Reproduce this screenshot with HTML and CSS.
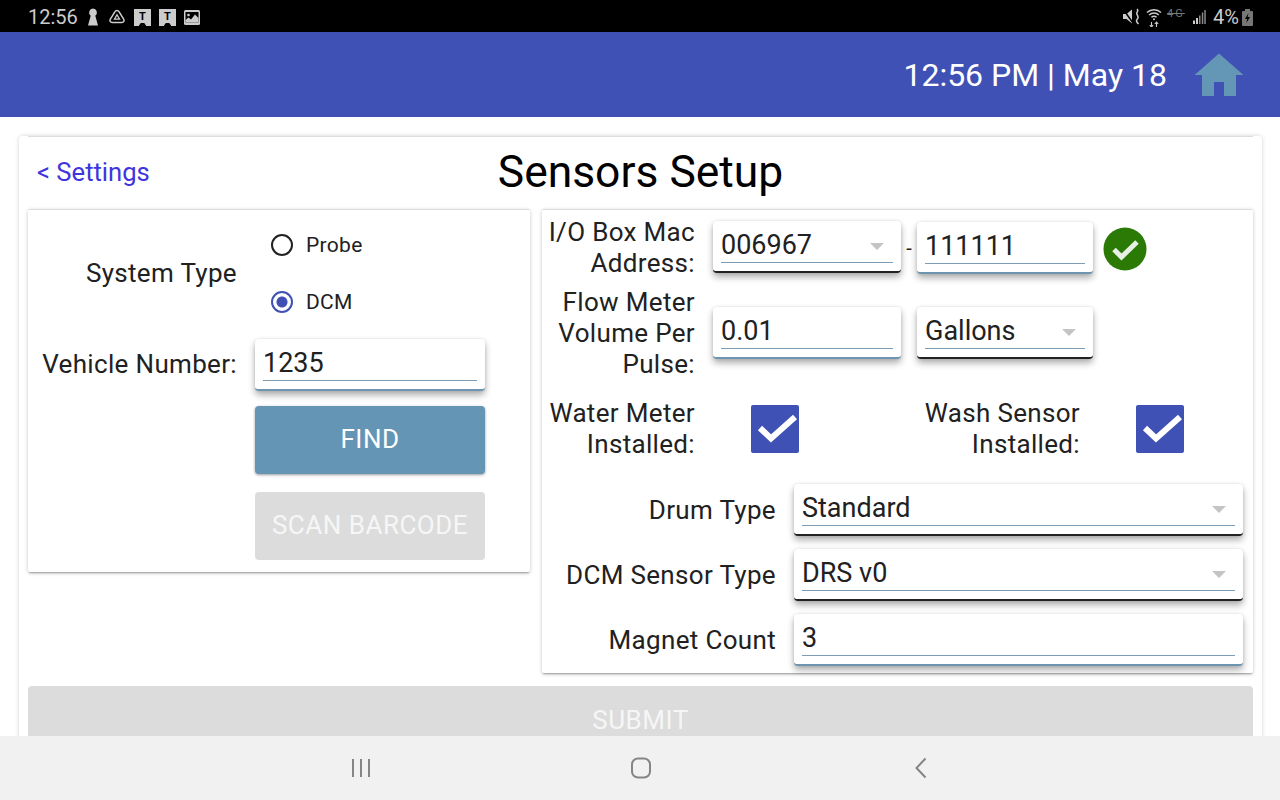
FILE: index.html
```html
<!DOCTYPE html>
<html lang="en">
<head>
  <title>Sensors Setup</title>
  <link rel="stylesheet" href="styles.css">
</head>
<body>

  <div class="status-bar">
    <div class="status-left">
      <span class="status-time">12:56</span>
      <svg class="ic-key" width="12" height="18" viewBox="0 0 12 18"><path d="M6 .5a4 4 0 0 1 2.300 7.200L11 17.500H1L3.700 7.700A4 4 0 0 1 6 .5z" fill="#ccc"/></svg>
      <svg class="ic-drive" width="18" height="16" viewBox="0 0 18 16"><path d="M9 1.500c1 0 1.600.5 2 1.200l4.800 7.600c.8 1.500-.1 3.200-1.900 3.200H4.100c-1.800 0-2.700-1.700-1.900-3.200L7 2.700c.4-.7 1-1.200 2-1.200z" fill="none" stroke="#ccc" stroke-width="1.500"/><path d="M9 5.800l2.500 4.400h-5z" fill="none" stroke="#ccc" stroke-width="1.300"/></svg>
      <span class="ic-t">T</span>
      <span class="ic-t">T</span>
      <svg class="ic-pic" width="16" height="15" viewBox="0 0 16 15"><rect width="16" height="15" rx="1.500" fill="#ccc"/><rect x="1.500" y="2" width="13" height="10.500" fill="#000"/><path d="M1.500 12.500V10l3-2.500 2.500 2 4-5 3.500 3.500v4.500z" fill="#ccc"/><circle cx="4.500" cy="5" r="1.300" fill="#ccc"/></svg>
    </div>
    <div class="status-right">
      <svg width="22" height="20" viewBox="0 0 22 20"><path d="M1 7h3.500L10 2.500v14L4.500 12H1z" fill="#ccc"/><path d="M1 2l10 14" stroke="#000" stroke-width="1.500"/><path d="M15 2c2.500 2-1.500 3.500 0 5.500s1.500 3.500 0 5 0 3 1.500 4.500" fill="none" stroke="#ccc" stroke-width="1.500"/></svg>
      <svg width="16" height="20" viewBox="0 0 16 20"><path d="M1 5.500a10 10 0 0 1 14 0M3.200 8a7 7 0 0 1 9.600 0M5.400 10.300a4 4 0 0 1 5.200 0" fill="none" stroke="#ccc" stroke-width="1.500"/><circle cx="8" cy="12.300" r="1" fill="#ccc"/><path d="M5.500 15v5M3.800 18l1.700 2 1.700-2M10.500 20v-5M8.800 17l1.700-2 1.700 2" fill="none" stroke="#ccc" stroke-width="1.100"/></svg>
      <span class="ic-lte">4G</span>
      <svg width="14" height="16" viewBox="0 0 14 16"><path d="M1 11.500h2V15H1zM4 9h2v6H4z" fill="#ccc"/><path d="M7 6.500h1.500V15H7zM9.800 3.500h1.500V15H9.800zM12.300 1h1.500v14h-1.500z" fill="#888"/></svg>
      <span class="status-pct">4%</span>
      <svg width="11" height="17" viewBox="0 0 11 17"><rect x="3" y="0" width="5" height="2" fill="#777"/><rect y="2" width="11" height="15" rx="1" fill="#777"/><path d="M6.500 4L3 10h2.200L4.300 14 8 8H5.600z" fill="#000"/></svg>
    </div>
  </div>

  <div class="app-bar">
    <span class="app-clock">12:56 PM | May 18</span>
    <svg class="home-icon" width="50" height="44" viewBox="0 0 50 44"><path d="M25 .5L49.500 22H42v21H30V29H20v14H8V22H.500z" fill="#6496b5"/></svg>
  </div>

  <div class="content">
    <div class="page-card">
      <div class="page-head">
        <a class="back-link" href="#">&lt; Settings</a>
        <h1>Sensors Setup</h1>
      </div>

      <div class="columns">
        <div class="panel left-panel">
          <div class="system-row">
            <div class="left-label">System Type</div>
            <div class="radios">
              <div class="radio-item"><span class="radio"></span>Probe</div>
              <div class="radio-item"><span class="radio radio-on"></span>DCM</div>
            </div>
          </div>
          <div class="vehicle-row">
            <div class="left-label">Vehicle Number:</div>
            <div class="field field-input vehicle-field"><div class="field-value">1235</div></div>
          </div>
          <div class="btn btn-find">FIND</div>
          <div class="btn btn-scan">SCAN BARCODE</div>
        </div>

        <div class="panel right-panel">
          <div class="form-row mac-row">
            <div class="row-label">I/O Box Mac<br>Address:</div>
            <div class="field field-select w-188 mac-prefix"><div class="field-value">006967<span class="caret"></span></div></div>
            <span class="dash">-</span>
            <div class="field field-input w-176"><div class="field-value">111111</div></div>
            <svg class="ok-icon" width="44" height="44" viewBox="0 0 44 44"><circle cx="22" cy="22" r="21.500" fill="#2a7a05"/><path d="M11 22.500l7.500 7.500L34 15" fill="none" stroke="#e8efe4" stroke-width="5"/></svg>
          </div>
          <div class="form-row flow-row">
            <div class="row-label">Flow Meter<br>Volume Per<br>Pulse:</div>
            <div class="field field-input w-188"><div class="field-value">0.01</div></div>
            <div class="field field-select w-176 unit-field"><div class="field-value">Gallons<span class="caret"></span></div></div>
          </div>
          <div class="form-row check-row">
            <div class="row-label">Water Meter<br>Installed:</div>
            <div class="checkbox water-check"><svg width="48" height="48" viewBox="0 0 48 48"><path d="M9 23l11 10.500L44 12" fill="none" stroke="#fff" stroke-width="6"/></svg></div>
            <div class="row-label wash-label">Wash Sensor<br>Installed:</div>
            <div class="checkbox wash-check"><svg width="48" height="48" viewBox="0 0 48 48"><path d="M9 23l11 10.500L44 12" fill="none" stroke="#fff" stroke-width="6"/></svg></div>
          </div>
          <div class="form-row wide-row drum-row">
            <div class="row-label wide-label">Drum Type</div>
            <div class="field field-select w-449"><div class="field-value">Standard<span class="caret"></span></div></div>
          </div>
          <div class="form-row wide-row">
            <div class="row-label wide-label">DCM Sensor Type</div>
            <div class="field field-select w-449"><div class="field-value">DRS v0<span class="caret"></span></div></div>
          </div>
          <div class="form-row wide-row">
            <div class="row-label wide-label">Magnet Count</div>
            <div class="field field-input w-449"><div class="field-value">3</div></div>
          </div>
        </div>
      </div>

      <div class="submit-btn">SUBMIT</div>
    </div>
  </div>

  <div class="nav-bar">
    <svg width="20" height="20" viewBox="0 0 20 20"><path d="M2 1v18M10 1v18M18 1v18" stroke="#858585" stroke-width="2" fill="none"/></svg>
    <svg class="nav-home" width="22" height="22" viewBox="0 0 22 22"><rect x="2" y="1.500" width="18" height="19" rx="6" stroke="#858585" stroke-width="2" fill="none"/></svg>
    <svg class="nav-back" width="14" height="22" viewBox="0 0 14 22"><path d="M11.500 1.500L2.500 11l9 9.500" stroke="#858585" stroke-width="2" fill="none"/></svg>
  </div>

</body>
</html>
```

FILE: styles.css
```css
* { box-sizing: border-box; margin: 0; padding: 0; }
html, body { height: 100%; }
body {
  width: 1280px;
  height: 800px;
  overflow: hidden;
  display: flex;
  flex-direction: column;
  font-family: Roboto, "Liberation Sans", sans-serif;
  color: #212121;
  background-color: #fff;
}

/* android status bar */
.status-bar {
  flex: 0 0 32px;
  background-color: #000;
  display: flex;
  align-items: center;
  justify-content: space-between;
  padding: 2px 27px 0 28px;
  color: #ccc;
}
.status-left, .status-right { display: flex; align-items: center; }
.status-time { font-size: 20px; margin-right: 9px; }
.ic-key { margin-right: 9px; }
.ic-drive { margin-right: 8px; }
.ic-t {
  width: 17px; height: 17px; margin-right: 8px;
  background: radial-gradient(circle at 50% 100%, #000 0 3px, #ccc 3.5px);
  color: #000;
  font-size: 11px; font-weight: bold; line-height: 16px; text-align: center;
}
.status-right svg { margin-left: 2px; }
.ic-lte {
  width: 20px; margin: 0 3px 6px 5px;
  font-size: 11px; line-height: 10px; color: #777; letter-spacing: 2px;
  text-decoration: line-through;
}
.status-pct { font-size: 20px; margin-left: 7px; margin-right: 1px; }

/* blue app bar */
.app-bar {
  flex: 0 0 85px;
  background-color: #3f51b5;
  display: flex;
  align-items: center;
  justify-content: flex-end;
  padding-right: 36px;
}
.app-clock { font-size: 32px; color: #fff; margin-top: 1px; }
.home-icon { margin-left: 27px; }

.content {
  flex: 1;
  min-height: 0;
  overflow: hidden;
  padding: 19px 18px 0 19px;
}
.page-card {
  background-color: #fff;
  padding: 0 9px 8px 9px;
  border-radius: 4px;
  box-shadow: 0 0 4px rgba(0,0,0,0.18);
}
.page-head {
  position: relative;
  height: 73px;
  border-top: 1px solid #ddd;
  text-align: center;
}
.page-head h1 { font-size: 44.4px; font-weight: 400; line-height: 70px; color: #000; }
.back-link {
  position: absolute; left: 9px; top: 19px;
  font-size: 25.6px; line-height: 32px; color: #3f35dd; text-decoration: none;
}

.columns { display: flex; align-items: flex-start; gap: 12px; }
.panel {
  background-color: #fff;
  border-radius: 2px;
  box-shadow: 0 2px 2px -1px rgba(0,0,0,0.3), 0 1px 4px rgba(0,0,0,0.2);
  border-top: 1px solid #ddd;
}

/* left side */
.left-panel { width: 502px; height: 363px; padding-left: 227px; }
.system-row, .vehicle-row { display: flex; margin-left: -227px; }
.system-row { height: 129px; padding-bottom: 1px; align-items: center; }
.vehicle-row { height: 52px; align-items: center; }
.left-label {
  width: 209px; margin-right: 18px; margin-bottom: 2px;
  text-align: right; font-size: 26px; letter-spacing: 0.33px;
}
.radios { display: flex; flex-direction: column; gap: 26px; margin-top: -2px; }
.radio-item { display: flex; align-items: center; height: 31px; font-size: 21px; letter-spacing: 0.3px; }
.radio {
  width: 22px; height: 22px; margin-right: 13px; margin-left: 16px;
  border: 2px solid #212121; border-radius: 50%;
}
.radio-on {
  border-color: #3f51b5;
  background: radial-gradient(circle, #3f51b5 0 5px, transparent 6px);
}
.vehicle-field { width: 230px; }
.btn {
  width: 230px; height: 68px;
  padding-bottom: 2px;
  display: flex; align-items: center; justify-content: center;
  border-radius: 4px;
  color: #fff;
  font-size: 26px;
  letter-spacing: 0.5px;
}
.btn-find {
  margin-top: 15px;
  background-color: #6495b5;
  box-shadow: 0 1px 3px rgba(0,0,0,0.4);
}
.btn-scan { margin-top: 18px; background-color: #dcdcdc; color: #f6f6f6; }

/* inputs */
.field {
  height: 52px;
  padding: 0 8px;
  background-color: #fff;
  border-radius: 4px;
  border-bottom: 2px solid #6d95b0;
  box-shadow: 0 4px 7px rgba(0,0,0,0.32), 0 0 3px rgba(0,0,0,0.1);
}
.field-select { border-bottom-color: #222; }
.field-value {
  position: relative;
  height: 42px;
  border-bottom: 1px solid #7b9db5;
  font-size: 27px;
  line-height: 48px;
  color: #212121;
}
.caret {
  position: absolute; right: 9px; top: 22px;
  border-left: 7px solid transparent;
  border-right: 7px solid transparent;
  border-top: 7px solid #c4c4c4;
}
.w-188 { width: 188px; }
.w-176 { width: 176px; }
.w-449 { width: 449px; }

/* right side */
.right-panel { width: 711px; height: 464px; padding-top: 6px; }
.form-row { display: flex; align-items: center; }
.row-label {
  width: 153px; margin-right: 18px;
  text-align: right; font-size: 26px; line-height: 31px; letter-spacing: 0.33px;
}
.mac-row { height: 62px; margin-top: 1px; }
.mac-prefix { margin-bottom: 2px; }
.dash { width: 16px; text-align: center; font-size: 20px; }
.ok-icon { margin-left: 10px; margin-top: 1px; }
.flow-row { height: 92px; margin-top: 8px; }
.unit-field { margin-left: 16px; }
.check-row { height: 62px; margin-top: 19px; }
.checkbox { width: 48px; height: 48px; background-color: #3f51b5; border-radius: 2px; }
.water-check { margin-left: 38px; }
.wash-label { width: 281px; margin-right: 0; }
.wash-check { margin-left: 56px; }
.wide-row { height: 52px; margin-top: 13px; }
.drum-row { margin-top: 24px; }
.wide-label { width: 234px; }

.submit-btn {
  margin-top: 13px;
  height: 68px;
  display: flex; align-items: center; justify-content: center;
  background-color: #dcdcdc;
  color: #f6f6f6;
  border-radius: 4px;
  font-size: 26px;
  letter-spacing: 0.5px;
}

/* android nav bar */
.nav-bar {
  flex: 0 0 64px;
  background-color: #f1f1f1;
  display: flex;
  align-items: center;
  padding-left: 351px;
}
.nav-home { margin-left: 259px; }
.nav-back { margin-left: 262px; }
```
